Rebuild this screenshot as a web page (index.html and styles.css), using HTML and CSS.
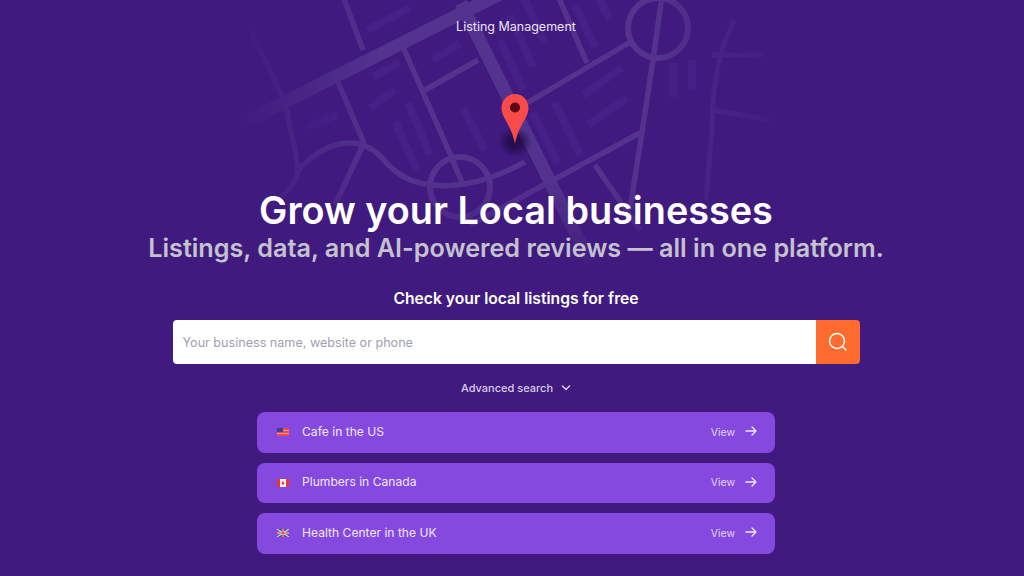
FILE: index.html
```html
<!DOCTYPE html>
<html lang="en">

<head>
    <meta charset="utf-8">
    <title>Listing Management</title>
    <link rel="stylesheet" href="styles.css">
</head>

<body>
    <div class="hero">
        <!-- street map behind the heading -->
        <svg class="map" width="1024" height="300" viewBox="0 0 1024 300" fill="none">
            <defs>
                <linearGradient id="fade" x1="0" y1="0" x2="0" y2="1">
                    <stop offset="0" stop-color="#fff"/>
                    <stop offset="0.6" stop-color="#fff"/>
                    <stop offset="0.95" stop-color="#000"/>
                </linearGradient>
                <linearGradient id="sides" x1="0" y1="0" x2="1" y2="0">
                    <stop offset="0.23" stop-color="#000"/>
                    <stop offset="0.37" stop-color="#fff"/>
                    <stop offset="0.64" stop-color="#fff"/>
                    <stop offset="0.78" stop-color="#1c1c1c"/>
                </linearGradient>
                <mask id="fadeMask"><rect width="1024" height="300" fill="url(#fade)"/></mask>
                <mask id="sideMask"><rect width="1024" height="300" fill="url(#sides)"/></mask>
                <radialGradient id="pinShadow">
                    <stop offset="0" stop-color="#1f0a45"/>
                    <stop offset="0.45" stop-color="#1f0a45" stop-opacity="0.7"/>
                    <stop offset="1" stop-color="#1f0a45" stop-opacity="0"/>
                </radialGradient>
            </defs>
            <g mask="url(#fadeMask)">
                <g mask="url(#sideMask)">
                    <g stroke="#452187" stroke-width="8">
                        <path d="M367 30L410 8M433 60L460 43M373 77L400 62M370 108L395 90M408 103L430 155M395 122L417 170M463 108L485 150M500 40L523 90M510 15L533 67M523 -4L545 43M533 113L558 163M555 103L580 155M583 95L622 68M588 125L627 98M575 5L595 47M598 -4L610 20"/>
                        <path d="M255 120L277 110M307 127L337 115M673 63V97M692 60V90"/>
                    </g>
                    <g stroke="#53338e">
                        <path stroke-width="13" d="M225 132L500 -6M461 3L590 262"/>
                        <path stroke-width="5.500" d="M343 -4L363 50M403 47L455 165M337 80L364 143M425 90L478 60M515 110L632 41M558 -4L587 63M662 -4L653 60L630 210M640 133L470 225M284 100L296 155L298 170Q296 188 270 205M250 30L284 100M364 143L335 205M450 155L462 182M595 165L640 230"/>
                        <path stroke-width="5.500" d="M298 170Q325 142 350 143Q368 143 382 158Q400 180 425 184Q470 192 525 162"/>
                        <circle cx="658" cy="28" r="30" stroke-width="6"/>
                        <circle cx="460" cy="187" r="30" stroke-width="6"/>
                    </g>
                    <path stroke="#4b2a88" stroke-width="5" d="M735 20Q712 60 712 130L706 200M712 55L765 55M712 110L770 120"/>
                </g>
            </g>
            <ellipse cx="515" cy="142" rx="17" ry="15" fill="url(#pinShadow)"/>
            <path fill="#f94a4a" d="M515 94C522.500 94 528.500 100 528.500 108C528.500 118 519 124 515 144C511 124 501.500 118 501.500 108C501.500 100 507.500 94 515 94Z"/>
            <circle cx="515" cy="107.500" r="5" fill="#5a0a14"/>
        </svg>

        <div class="topbar">Listing Management</div>

        <div class="content">
            <h1 class="title">Grow your Local businesses</h1>
            <h2 class="subtitle">Listings, data, and AI-powered reviews — all in one platform.</h2>

            <div class="check-label">Check your local listings for free</div>

            <div class="search">
                <input class="search-input" type="text" placeholder="Your business name, website or phone">
                <button class="search-btn">
                    <svg width="20" height="20" viewBox="0 0 20 20" fill="none" stroke="#fff" stroke-width="1.500" stroke-linecap="round">
                        <circle cx="9" cy="9" r="7.500"/>
                        <path d="M14.500 14.500L18 18"/>
                    </svg>
                </button>
            </div>

            <div class="advanced">
                Advanced search
                <svg width="10" height="6" viewBox="0 0 10 6" fill="none" stroke="#d8cfe8" stroke-width="1.500" stroke-linecap="round" stroke-linejoin="round">
                    <path d="M1.500 1L5 4.500L8.500 1"/>
                </svg>
            </div>

            <div class="examples">
                <a class="example">
                    <svg class="flag" width="12" height="8" viewBox="0 0 12 8">
                        <rect width="12" height="8" fill="#f0464e"/>
                        <path d="M0 2.500H12M0 5.500H12" stroke="#f3a9b4" stroke-width="0.800"/>
                        <rect width="6" height="4" fill="#43408f"/>
                    </svg>
                    <span class="example-name">Cafe in the US</span>
                    <span class="example-view">View</span>
                    <svg class="arrow" width="12" height="10" viewBox="0 0 12 10" fill="none" stroke="#f0e8fb" stroke-width="1.300" stroke-linecap="round" stroke-linejoin="round">
                        <path d="M1 5H11M7 1L11 5L7 9"/>
                    </svg>
                </a>
                <a class="example">
                    <svg class="flag" width="12" height="8" viewBox="0 0 12 8">
                        <rect width="12" height="8" fill="#f8eef0"/>
                        <rect width="3" height="8" fill="#e5343c"/>
                        <rect x="9" width="3" height="8" fill="#e5343c"/>
                        <path d="M6 1.500L7.500 5H6.500V6H5.500V5H4.500Z" fill="#e5343c"/>
                    </svg>
                    <span class="example-name">Plumbers in Canada</span>
                    <span class="example-view">View</span>
                    <svg class="arrow" width="12" height="10" viewBox="0 0 12 10" fill="none" stroke="#f0e8fb" stroke-width="1.300" stroke-linecap="round" stroke-linejoin="round">
                        <path d="M1 5H11M7 1L11 5L7 9"/>
                    </svg>
                </a>
                <a class="example">
                    <svg class="flag" width="12" height="8" viewBox="0 0 12 8">
                        <rect width="12" height="8" fill="#4a4688"/>
                        <path d="M0 0L12 8M12 0L0 8" stroke="#d9d4e8" stroke-width="1.200"/>
                        <path d="M6 0V8M0 4H12" stroke="#d9d4e8" stroke-width="2.400"/>
                        <path d="M6 0V8M0 4H12" stroke="#d8404e" stroke-width="1.200"/>
                    </svg>
                    <span class="example-name">Health Center in the UK</span>
                    <span class="example-view">View</span>
                    <svg class="arrow" width="12" height="10" viewBox="0 0 12 10" fill="none" stroke="#f0e8fb" stroke-width="1.300" stroke-linecap="round" stroke-linejoin="round">
                        <path d="M1 5H11M7 1L11 5L7 9"/>
                    </svg>
                </a>
            </div>
        </div>
    </div>
</body>

</html>
```

FILE: styles.css
```css
* {
    box-sizing: border-box;
}

html, body {
    margin: 0;
    height: 100%;
    overflow: hidden;
}

body {
    background-color: #401a7e;
    font-family: Inter, "Noto Sans", sans-serif;
    color: #fff;
}

.hero {
    position: relative;
    height: 576px;
}

.map {
    position: absolute;
    top: 0;
    left: 0;
}

.topbar {
    position: relative;
    height: 36px;
    padding: 19px 0 0 8px;
    font-size: 12.500px;
    line-height: 16px;
    text-align: center;
    color: #ebe4f5;
}

.content {
    position: relative;
    display: flex;
    flex-direction: column;
    align-items: center;
    padding: 151px 0 0 8px;
}

.title {
    margin: 0;
    font-size: 37.800px;
    line-height: 46px;
    font-weight: 600;
}

.subtitle {
    margin: 0;
    font-size: 25.200px;
    line-height: 30px;
    font-weight: 600;
    color: #c4c2cf;
}

.check-label {
    margin-top: 25px;
    font-size: 15.700px;
    line-height: 22px;
    font-weight: 600;
}

.search {
    display: flex;
    width: 687px;
    height: 44px;
    margin-top: 10px;
}

.search-input {
    flex: 1;
    min-width: 0;
    padding: 0 10px;
    border: 0;
    border-radius: 4px 0 0 4px;
    background-color: #fff;
    font-family: inherit;
    font-size: 12.600px;
    outline: none;
}

.search-input::placeholder {
    color: #a0a0b2;
    opacity: 1;
}

.search-btn {
    display: flex;
    align-items: center;
    justify-content: center;
    width: 44px;
    border: 0;
    border-radius: 0 4px 4px 0;
    background-color: #ff6a2f;
    padding: 0;
}

.advanced {
    display: flex;
    align-items: center;
    gap: 8px;
    margin-top: 16px;
    font-size: 11px;
    line-height: 16px;
    font-weight: 500;
    color: #d8cfe8;
}

.examples {
    display: flex;
    flex-direction: column;
    gap: 10px;
    width: 518px;
    margin-top: 16px;
}

.example {
    display: flex;
    align-items: center;
    height: 40.500px;
    padding: 0 18px 0 20px;
    border-radius: 8px;
    background-color: #8549e0;
    font-size: 12.100px;
    color: #f0e8fb;
}

.flag {
    margin-right: 13px;
}

.example-name {
    flex: 1;
    padding-bottom: 2px;
}

.example-view {
    margin-right: 10px;
    font-size: 10.500px;
    color: #e3d6f6;
}

.arrow {
    margin-bottom: 2px;
}
```
